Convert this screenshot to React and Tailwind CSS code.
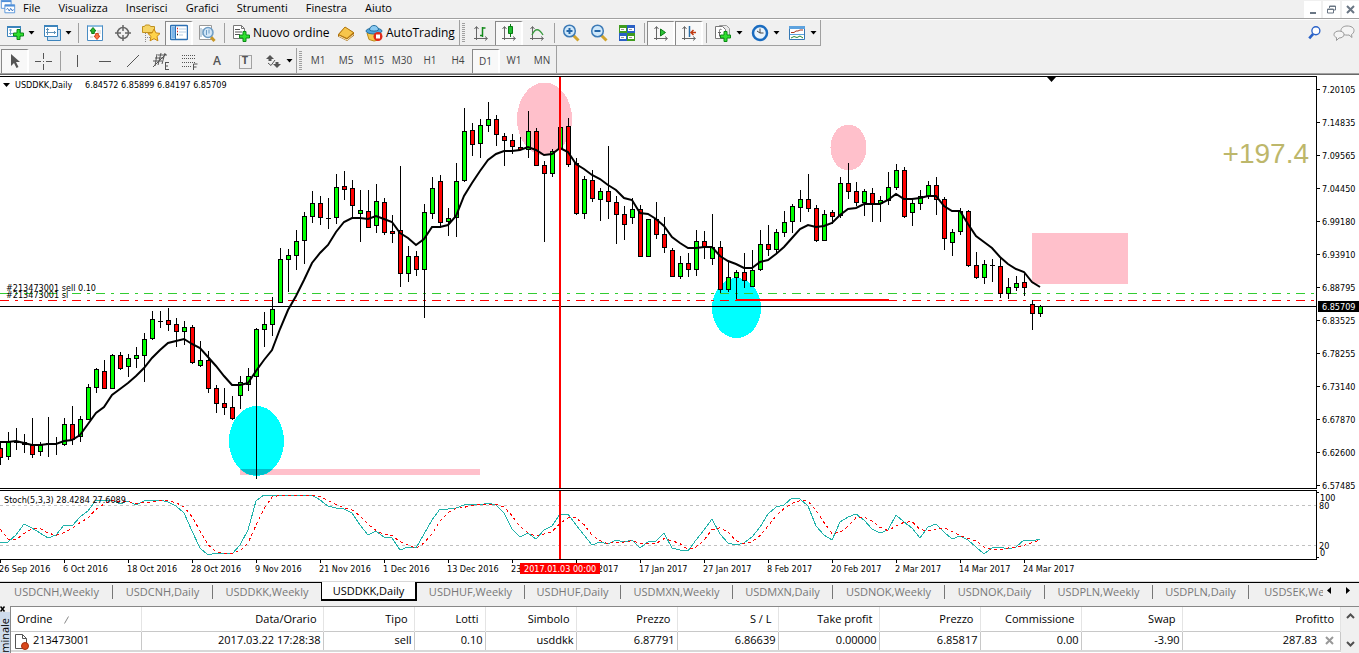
import { useState } from 'react';

// x is the bar index * 8, values are [color, high, open/close top, open/close bottom, low]
const candles = [
  ['r', 442, 448, 458, 465], ['g', 432, 442, 457, 460], ['d', 428, 442, 443, 450], ['r', 434, 442, 445, 453],
  ['r', 418, 445, 455, 458], ['g', 442, 445, 452, 456], ['d', 417, 443, 444, 457], ['d', 437, 443, 444, 455],
  ['g', 418, 424, 445, 446], ['r', 406, 424, 440, 445], ['g', 416, 419, 437, 442], ['g', 384, 387, 420, 420],
  ['g', 368, 369, 388, 393], ['r', 360, 371, 389, 389], ['g', 354, 355, 389, 389], ['r', 352, 355, 369, 370],
  ['g', 354, 358, 367, 377], ['g', 347, 355, 359, 368], ['g', 333, 339, 356, 382], ['g', 311, 319, 339, 340],
  ['d', 311, 321, 322, 328], ['r', 308, 320, 325, 331], ['r', 318, 324, 332, 347], ['g', 321, 327, 332, 345],
  ['r', 325, 327, 363, 364], ['g', 341, 360, 366, 367], ['r', 351, 360, 389, 393], ['r', 385, 388, 404, 413],
  ['r', 388, 403, 408, 415], ['r', 396, 407, 419, 420], ['g', 376, 382, 396, 409], ['g', 368, 376, 385, 391],
  ['g', 328, 329, 377, 479], ['g', 312, 324, 330, 347], ['g', 297, 309, 325, 336], ['g', 248, 259, 303, 303],
  ['g', 249, 255, 260, 292], ['g', 230, 241, 256, 270], ['g', 212, 216, 241, 264], ['g', 191, 203, 217, 223],
  ['r', 196, 203, 218, 225], ['d', 198, 218, 219, 229], ['g', 174, 187, 218, 224], ['r', 171, 186, 190, 200],
  ['r', 180, 188, 206, 218], ['g', 190, 210, 214, 242], ['r', 190, 211, 228, 228], ['g', 184, 201, 226, 233],
  ['r', 198, 202, 233, 235], ['r', 215, 231, 234, 243], ['r', 166, 230, 274, 287], ['g', 246, 256, 274, 282],
  ['r', 251, 256, 270, 276], ['g', 204, 212, 270, 318], ['g', 177, 188, 214, 219], ['r', 175, 181, 223, 228],
  ['g', 208, 218, 222, 236], ['g', 163, 181, 218, 237], ['g', 108, 131, 181, 182], ['r', 123, 130, 145, 156],
  ['g', 119, 125, 144, 158], ['g', 102, 119, 126, 132], ['r', 115, 119, 135, 146], ['r', 133, 136, 141, 166],
  ['r', 134, 140, 147, 154], ['r', 137, 147, 150, 150], ['g', 111, 131, 150, 158], ['r', 128, 131, 166, 166],
  ['r', 161, 165, 174, 242], ['g', 149, 151, 174, 177], ['g', 127, 127, 149, 149], ['r', 118, 126, 165, 167],
  ['r', 158, 163, 214, 215], ['g', 176, 179, 214, 219], ['r', 170, 180, 199, 202], ['g', 188, 191, 200, 221],
  ['r', 146, 191, 202, 219], ['r', 196, 202, 215, 244], ['r', 206, 214, 225, 240], ['g', 198, 209, 218, 224],
  ['r', 205, 209, 257, 257], ['g', 219, 219, 257, 257], ['r', 202, 219, 235, 239], ['r', 217, 234, 248, 253],
  ['r', 248, 250, 277, 277], ['g', 256, 263, 277, 279], ['r', 253, 263, 270, 277], ['g', 230, 241, 270, 276],
  ['r', 231, 241, 247, 259], ['g', 214, 247, 259, 265], ['r', 241, 247, 290, 293], ['g', 262, 277, 290, 292],
  ['g', 270, 272, 278, 299], ['r', 253, 272, 281, 288], ['g', 250, 270, 287, 287], ['g', 230, 244, 270, 271],
  ['r', 225, 244, 250, 256], ['g', 229, 232, 250, 253], ['g', 211, 222, 233, 237], ['g', 204, 206, 222, 233],
  ['g', 190, 199, 208, 222], ['r', 174, 199, 209, 212], ['r', 205, 208, 241, 242], ['g', 210, 214, 241, 241],
  ['r', 210, 212, 217, 224], ['g', 177, 183, 216, 218], ['r', 163, 183, 192, 199], ['r', 182, 191, 203, 206],
  ['g', 189, 191, 203, 216], ['r', 188, 193, 204, 222], ['g', 196, 200, 204, 222], ['g', 172, 187, 201, 205],
  ['g', 164, 170, 188, 190], ['r', 167, 170, 217, 218], ['g', 199, 203, 213, 226], ['g', 190, 196, 204, 210],
  ['g', 181, 185, 197, 199], ['r', 177, 185, 200, 215], ['r', 197, 199, 239, 250], ['g', 229, 232, 243, 256],
  ['g', 208, 211, 232, 235], ['r', 210, 211, 266, 267], ['r', 252, 265, 278, 279], ['g', 260, 264, 278, 284],
  ['d', 259, 265, 266, 282], ['r', 257, 266, 294, 298], ['g', 278, 287, 294, 299], ['g', 276, 283, 288, 291],
  ['r', 272, 282, 288, 296], ['r', 300, 304, 314, 330], ['g', 305, 306, 314, 317],
];

const average = [
  442, 442, 441, 443, 445, 445, 444, 444, 441, 440, 435, 424, 413, 407, 395, 389, 383, 376, 368, 358,
  350, 343, 341, 339, 344, 348, 357, 366, 376, 385, 385, 383, 371, 360, 350, 329, 310, 296, 280, 263,
  253, 245, 232, 222, 218, 218, 219, 216, 219, 222, 233, 238, 245, 239, 227, 227, 225, 216, 196, 183,
  171, 160, 154, 151, 151, 150, 147, 150, 155, 154, 148, 152, 164, 169, 175, 179, 185, 190, 198, 200,
  213, 214, 219, 226, 237, 243, 248, 248, 247, 247, 256, 261, 264, 268, 268, 262, 260, 254, 247, 238,
  229, 225, 227, 226, 223, 215, 209, 208, 204, 204, 204, 200, 194, 199, 199, 198, 196, 196, 206, 211,
  211, 224, 236, 242, 248, 257, 264, 269, 272, 282, 287,
];

const stochMain = [
  542, 542, 535, 524, 528, 533, 538, 535, 525, 526, 517, 511, 500, 501, 500, 504, 501, 505, 501, 500,
  500, 502, 506, 513, 531, 548, 555, 553, 553, 554, 545, 530, 501, 495, 495, 496, 495, 495, 495, 495,
  500, 506, 508, 509, 513, 525, 535, 531, 537, 538, 550, 547, 548, 534, 520, 509, 509, 508, 505, 504,
  505, 503, 505, 513, 529, 537, 533, 539, 530, 526, 514, 514, 525, 535, 545, 542, 544, 540, 542, 540,
  548, 542, 541, 533, 548, 550, 551, 540, 530, 519, 534, 543, 545, 543, 537, 527, 514, 507, 505, 498,
  499, 506, 526, 535, 540, 522, 517, 514, 520, 529, 533, 530, 515, 522, 528, 538, 527, 524, 532, 539,
  536, 540, 547, 554, 548, 547, 549, 547, 540, 541, 539,
];

// %D is the three bar average of %K
const stochSignal = stochMain.map((v, i) => {
  if (i === 0) return 529;
  if (i === 1) return 539;
  return (v + stochMain[i - 1] + stochMain[i - 2]) / 3;
});

const toPoints = (values) => values.map((y, i) => `${i * 8},${y}`).join(' ');

const priceLabels = [
  ['7.20105', 90], ['7.14835', 123], ['7.09565', 156], ['7.04450', 189], ['6.99180', 222],
  ['6.93910', 255], ['6.88795', 288], ['6.83525', 321], ['6.78255', 354], ['6.73140', 387],
  ['6.67870', 420], ['6.62600', 453], ['6.57485', 486],
];

const dates = [
  '26 Sep 2016', '6 Oct 2016', '18 Oct 2016', '28 Oct 2016', '9 Nov 2016', '21 Nov 2016',
  '1 Dec 2016', '13 Dec 2016', '23 Dec 2016', '5 Jan 2017', '17 Jan 2017', '27 Jan 2017',
  '8 Feb 2017', '20 Feb 2017', '2 Mar 2017', '14 Mar 2017', '24 Mar 2017',
];

const menu = ['File', 'Visualizza', 'Inserisci', 'Grafici', 'Strumenti', 'Finestra', 'Aiuto'];

const periods = ['M1', 'M5', 'M15', 'M30', 'H1', 'H4', 'D1', 'W1', 'MN'];

const tabs = [
  ['USDCNH,Weekly', 'w-28'], ['USDCNH,Daily', 'w-25'], ['USDDKK,Weekly', 'w-27'], ['USDDKK,Daily', 'w-24'],
  ['USDHUF,Weekly', 'w-27'], ['USDHUF,Daily', 'w-24'], ['USDMXN,Weekly', 'w-28'], ['USDMXN,Daily', 'w-25'],
  ['USDNOK,Weekly', 'w-28'], ['USDNOK,Daily', 'w-25'], ['USDPLN,Weekly', 'w-27'], ['USDPLN,Daily', 'w-24'],
  ['USDSEK,Weekly', 'w-28'],
];

const columns = [
  ['Ordine', '213473001', 'w-[130px]'],
  ['Data/Orario', '2017.03.22 17:28:38', 'w-[182px]'],
  ['Tipo', 'sell', 'w-[91px]'],
  ['Lotti', '0.10', 'w-[71px]'],
  ['Simbolo', 'usddkk', 'w-[91px]'],
  ['Prezzo', '6.87791', 'w-[101px]'],
  ['S / L', '6.86639', 'w-[101px]'],
  ['Take profit', '0.00000', 'w-[101px]'],
  ['Prezzo', '6.85817', 'w-[101px]'],
  ['Commissione', '0.00', 'w-[101px]'],
  ['Swap', '-3.90', 'w-[101px]'],
  ['Profitto', '287.83', ''],
];

const Icon = ({ children, size = 18 }) => (
  <svg width={size} height={size} viewBox="0 0 18 18" fill="none" className="shrink-0" aria-hidden="true">
    {children}
  </svg>
);

const Plus = ({ x, y }) => (
  <path
    transform={`translate(${x} ${y})`}
    d="M4 0.5h3v3.500h3.500v3H7v3.500H4V7H0.500V4H4z"
    fill="#2fe02f"
    stroke="#0b8a16"
  />
);

const Axes = () => (
  <path d="M4.500 16V3M2.500 5l2-2.500l2 2.500M2 14.500h13M13 12.500l2.500 2l-2.500 2" stroke="#666" />
);

const icons = {
  app: (
    <>
      <path d="M1.500 1.500h11v9h-11z" fill="#fff" stroke="#4f8fd8" />
      <path d="M1.500 2.500h11" stroke="#4f8fd8" strokeWidth="2" />
      <path d="M5.500 6.500h11v9h-11z" fill="#fff" stroke="#4f8fd8" />
      <path d="M5.500 7.500h11" stroke="#4f8fd8" strokeWidth="2" />
      <path d="M7 12l1.500-1.500l2 3l1.500-3l2 3l1-2" stroke="#2f6fc0" />
    </>
  ),
  newChart: (
    <>
      <path d="M1.500 2.500h13v10h-13z" fill="#fff" stroke="#3c84bc" />
      <path d="M1 3h14" stroke="#3c84bc" strokeWidth="2" />
      <path d="M4.500 5v6M3 9.500h9M3 6h3" stroke="#6fa3c8" />
      <Plus x={7} y={5} />
    </>
  ),
  profiles: (
    <>
      <path d="M4.500 5.500h13v11h-13z" fill="#cfe3f3" stroke="#3c84bc" />
      <path d="M1.500 1.500h13v11h-13z" fill="#fff" stroke="#3c84bc" />
      <path d="M1 2h14" stroke="#3c84bc" strokeWidth="2" />
      <path d="M4.500 4v7M3 8.500h10M3 5.500h3M11 7l1.500 1.500l-1.500 1.500" stroke="#5f93b8" />
    </>
  ),
  market: (
    <>
      <path d="M1.500 1.500h15v15h-15z" fill="#fff" stroke="#4a8dc4" />
      <path d="M2 2h14" stroke="#8dbce0" strokeWidth="2" />
      <path d="M11 7h4M11 9h4M4 13h3" stroke="#ccc" />
      <path d="M7 3.500L10 7H8.300v2.500H5.700V7H4z" fill="#27b92a" stroke="#0c7a18" />
      <path d="M11 15.500L8 12h1.700V9.500h2.600V12H14z" fill="#ff7a45" stroke="#d0421b" />
    </>
  ),
  target: (
    <>
      <circle cx="9" cy="9" r="5.500" stroke="#666" strokeWidth="1.500" />
      <path d="M9 1v6M9 11v6M1 9h6M11 9h6" stroke="#666" strokeWidth="1.500" />
    </>
  ),
  folder: (
    <>
      <path d="M0.500 8.500v-6h2l1-1.500h4l1 1.500h4v6z" fill="#f6d465" stroke="#bf9120" />
      <path d="M3.500 9v9M5 13.500h3" stroke="#888" strokeDasharray="1 1" />
      <path d="M12 5l1.900 3.900l4.300.5l-3.200 3l.9 4.400L12 14.700L8.100 16.800l.9-4.400l-3.200-3l4.300-.5z" fill="#ffd34a" stroke="#c8870e" />
    </>
  ),
  navigator: (
    <>
      <rect x="0.500" y="1.500" width="17" height="14" rx="1" fill="#fff" stroke="#2c70b4" strokeWidth="1.500" />
      <path d="M1.500 2.500h4v12h-4z" fill="#7db4e8" />
      <path d="M5.500 2v13" stroke="#2c70b4" />
      <path d="M9 5h7M9 8h7M9 11h4" stroke="#b6cde2" />
      <path d="M7 4.500h1M7 7.500h1" stroke="#e02020" strokeWidth="1.500" />
      <path d="M7 10.500h1" stroke="#222" strokeWidth="1.500" />
    </>
  ),
  tester: (
    <>
      <path d="M1.500 1.500h12v14h-12z" fill="#fff" stroke="#999" />
      <path d="M3 4v9M5 11V5M7 13V6" stroke="#88a8c0" />
      <path d="M13 13l3.500 4" stroke="#c89828" strokeWidth="3" />
      <circle cx="10" cy="8.500" r="5" fill="#cfe6f8" fillOpacity="0.900" stroke="#6d9cc4" strokeWidth="1.500" />
      <path d="M8.500 6v5M11 5.500v4" stroke="#6d9cc4" />
    </>
  ),
  order: (
    <>
      <path d="M1.500 1.500h8l3 3v10h-11z" fill="#fff" stroke="#777" />
      <path d="M9.500 1.500v3h3" stroke="#777" />
      <path d="M3 5.500h5M3 8h7M3 10.500h5" stroke="#555" />
      <Plus x={7} y={7} />
    </>
  ),
  book: (
    <>
      <path d="M1 10.500L8 3l9 5.500v3L10 17l-9-4.500z" fill="#a8690b" />
      <path d="M1.500 10.500L8 3l8.500 5.500L10 14.500z" fill="#f6c54b" stroke="#b57910" />
      <path d="M2 12l8 4l6.500-5.500" stroke="#fff0c0" />
    </>
  ),
  auto: (
    <>
      <path d="M2 9h14l-2.500 7l-4.500 1l-5-1.500z" fill="#f3c64c" stroke="#bd8a17" />
      <ellipse cx="9" cy="7" rx="8" ry="3" fill="#4ea4dd" stroke="#256f9f" />
      <path d="M4.500 6c0-6 9-6 9 0c-2 1.500-7 1.500-9 0z" fill="#8ccbf2" stroke="#256f9f" />
      <circle cx="13" cy="12.500" r="4.500" fill="#e02a1a" />
      <path d="M11 10.500h4v4h-4z" fill="#fff" />
    </>
  ),
  bars: (
    <>
      <Axes />
      <path d="M10.500 3v10M10.500 4h3M8 11.500h2" stroke="#148a1c" strokeWidth="1.500" />
    </>
  ),
  candle: (
    <>
      <Axes />
      <path d="M10.500 0v13" stroke="#0b7a14" />
      <path d="M8.500 2.500h4v7h-4z" fill="#20c030" stroke="#0b7a14" />
    </>
  ),
  line: (
    <>
      <Axes />
      <path d="M4 11c3-7 7-7 11 0" stroke="#3a9a3f" strokeWidth="1.300" />
    </>
  ),
  zoomIn: (
    <>
      <path d="M11 11l5.500 5.500" stroke="#d0a32e" strokeWidth="3" />
      <circle cx="7.500" cy="7" r="5.800" fill="#cfe8fa" stroke="#3c7ab6" strokeWidth="1.500" />
      <path d="M4.500 7h6M7.500 4v6" stroke="#2466a8" strokeWidth="2" />
    </>
  ),
  zoomOut: (
    <>
      <path d="M11 11l5.500 5.500" stroke="#d0a32e" strokeWidth="3" />
      <circle cx="7.500" cy="7" r="5.800" fill="#cfe8fa" stroke="#3c7ab6" strokeWidth="1.500" />
      <path d="M4.500 7h6" stroke="#2466a8" strokeWidth="2" />
    </>
  ),
  tile: (
    <>
      <path d="M1 1h8v8H1zM9 9h8v8H9z" fill="#3f9c1f" />
      <path d="M9 1h8v8H9zM1 9h8v8H1z" fill="#2a5fc4" />
      <path d="M2 4h6v3H2zM10 4h6v3h-6zM2 12h6v3H2zM10 12h6v3h-6z" fill="#fff" />
      <path d="M3 5.500h3M11 5.500h3M3 13.500h3M11 13.500h3" stroke="#999" />
    </>
  ),
  scroll: (
    <>
      <Axes />
      <path d="M8.500 5v7l5-3.500z" fill="#2bc236" stroke="#0b7a14" />
    </>
  ),
  shift: (
    <>
      <Axes />
      <path d="M9.500 2v11" stroke="#2a6fa8" strokeWidth="1.500" />
      <path d="M11 8.500h5M13.500 6l-2.500 2.500l2.500 2.500" stroke="#c03a10" strokeWidth="1.500" />
    </>
  ),
  indicators: (
    <>
      <path d="M5.500 1.500h7l3 3v9h-10z" fill="#e8e8e8" stroke="#999" />
      <path d="M1.500 2.500h7l3 3v9h-10z" fill="#fff" stroke="#777" />
      <path d="M7.500 5.500c-2-.5-2 0-2 2v5M4 8.500h3" stroke="#666" />
      <Plus x={6} y={7} />
    </>
  ),
  clock: (
    <>
      <circle cx="9" cy="9" r="7" fill="#eaf4fc" stroke="#1a6cc0" strokeWidth="2.500" />
      <path d="M9 4.500V9h3.500M9 9L6 7" stroke="#444" />
    </>
  ),
  template: (
    <>
      <path d="M1.500 2.500h15v13h-15z" fill="#fff" stroke="#3578b4" />
      <path d="M1 3.500h16" stroke="#5da2de" strokeWidth="3" />
      <path d="M2 10.500h14" stroke="#5da2de" />
      <path d="M3 8.500h3l2-1.500h2l2-1h3" stroke="#a8361c" />
      <path d="M3 14l3-1.500l3 1l3-1.500l3 2" stroke="#2b8a34" />
    </>
  ),
  cursor: <path d="M5 2v12l3-3l2.500 5l2-1l-2.500-5h4z" fill="#555" />,
  cross: <path d="M9.500 1v6M9.500 12v6M1 9.500h6M12 9.500h6M9 9.500h1" stroke="#555" />,
  vline: <path d="M9.500 3v12" stroke="#555" />,
  hline: <path d="M3 9.500h12" stroke="#555" />,
  trend: <path d="M3 15L15 3" stroke="#555" />,
  channel: (
    <>
      <path d="M1 15L14 2M1 9h9M3 6h9M6 3h9M5 2L3 14M9 1L6 13M13 1l-3 11" stroke="#555" />
      <path d="M13 10.500h4M13 14h3M13 17.500h4M13.500 10v8" stroke="#555" />
    </>
  ),
  fibo: (
    <>
      <path d="M2 3.500h14M2 6.500h14M2 10.500h14M2 14.500h9" stroke="#555" strokeDasharray="1 1" />
      <path d="M13.500 18v-6h4M13.500 15h3" stroke="#555" />
    </>
  ),
  arrows: (
    <>
      <path d="M6 3l4 4H7.500v2h-3V7H2z" fill="#555" />
      <path d="M13 16l-4-4h2.500v-2h3v2H17z" fill="#555" />
      <path d="M4 11l3 2.500l4-5.500" stroke="#555" />
    </>
  ),
  box: <path d="M3.500 3.500h12v13h-12z" stroke="#555" strokeDasharray="1 1" />,
  search: (
    <>
      <path d="M7 10l-4.500 5" stroke="#2a62c8" strokeWidth="3" />
      <circle cx="10" cy="6.500" r="4.500" fill="#fff" stroke="#2a62c8" strokeWidth="1.500" />
    </>
  ),
  orderDoc: (
    <>
      <path d="M3.500 2.500h7l4 4v10h-11z" fill="#fff" stroke="#555" />
      <path d="M10.500 2.500v4h4" stroke="#555" />
      <circle cx="13" cy="14" r="3.500" fill="#d9481c" stroke="#a82e0c" />
    </>
  ),
};

const ToolButton = ({ name, label, pressed = false, dropdown = false }) => (
  <button
    type="button"
    aria-label={label}
    aria-pressed={pressed}
    className={`flex h-6 items-center ${dropdown ? 'w-[37px] gap-1 pl-[5px]' : 'w-7 justify-center'} ${
      pressed ? 'border-t border-l border-r-2 border-t-[#888] border-l-[#888] border-r-white bg-[#f8f8f8]' : ''
    }`}
  >
    <Icon>{icons[name]}</Icon>
    {dropdown && <Caret />}
  </button>
);

const Caret = () => (
  <svg width="7" height="4" viewBox="0 0 7 4" className="shrink-0" aria-hidden="true">
    <path d="M0.500 0h6L3.500 3.500z" fill="#000" />
  </svg>
);

const Separator = () => (
  <div className="flex h-5 w-1.5 justify-center">
    <div className="w-px bg-[#a0a0a0]" />
  </div>
);

const Grip = () => (
  <div className="flex h-6 w-[7px] items-center justify-center">
    <div className="h-5 w-[3px] bg-[repeating-linear-gradient(180deg,#a0a0a0_0px,#a0a0a0_1px,#f0f0f0_1px,#f0f0f0_2px)]" />
  </div>
);

const MenuBar = () => (
  <nav className="flex h-[18px] items-center text-[11px]">
    <div className="w-[18px] pb-1">
      <Icon size={16}>{icons.app}</Icon>
    </div>
    <div className="flex flex-1 gap-[18px] pb-0.5 pl-[5px] leading-4">
      {menu.map((item) => (
        <button key={item} type="button">
          {item}
        </button>
      ))}
    </div>
    <div className="flex gap-0.5 text-[#6a7684]">
      <button type="button" aria-label="Minimize" className="flex h-[17px] w-[17px] items-center justify-center bg-white">
        <svg width="9" height="9" viewBox="0 0 9 9"><path d="M2 8h6" stroke="currentColor" strokeWidth="2" /></svg>
      </button>
      <button type="button" aria-label="Restore" className="flex h-[17px] w-[17px] items-center justify-center bg-white">
        <svg width="9" height="9" viewBox="0 0 9 9" fill="none" stroke="currentColor">
          <path d="M2.500 3V1h6v4h-2M0.500 4h6v4h-6zM0.500 4.500h6M2.500 1.500h6" />
        </svg>
      </button>
      <button type="button" aria-label="Close" className="flex h-[17px] w-[17px] items-center justify-center bg-white">
        <svg width="9" height="9" viewBox="0 0 9 9"><path d="M1 1l7 7M8 1l-7 7" stroke="currentColor" strokeWidth="2" /></svg>
      </button>
    </div>
  </nav>
);

const MainToolbar = () => (
  <div className="border-t border-[#a0a0a0]">
    <div className="flex h-[27px] items-center justify-between border-t border-white">
      <div className="flex h-[26px] items-center border-r border-b border-[#a0a0a0] pl-px">
        <ToolButton name="newChart" label="New chart" dropdown />
        <ToolButton name="profiles" label="Profiles" dropdown />
        <Separator />
        <ToolButton name="market" label="Market watch" />
        <ToolButton name="target" label="Data window" />
        <ToolButton name="folder" label="Navigator" />
        <ToolButton name="navigator" label="Terminal" pressed />
        <ToolButton name="tester" label="Strategy tester" />
        <Separator />
        <button type="button" className="flex h-6 w-[105px] items-center gap-[3px] pl-[5px] text-xs whitespace-nowrap">
          <Icon>{icons.order}</Icon>
          Nuovo ordine
        </button>
        <ToolButton name="book" label="MetaEditor" />
        <button type="button" className="flex h-6 w-[99px] items-center gap-[3px] pl-[5px] text-xs whitespace-nowrap">
          <Icon>{icons.auto}</Icon>
          AutoTrading
        </button>
        <div className="h-full w-px bg-[#a0a0a0]" />
        <Grip />
        <ToolButton name="bars" label="Bar chart" />
        <ToolButton name="candle" label="Candlesticks" pressed />
        <ToolButton name="line" label="Line chart" />
        <Separator />
        <ToolButton name="zoomIn" label="Zoom in" />
        <ToolButton name="zoomOut" label="Zoom out" />
        <ToolButton name="tile" label="Tile windows" />
        <Separator />
        <ToolButton name="scroll" label="Auto scroll" pressed />
        <ToolButton name="shift" label="Chart shift" pressed />
        <Separator />
        <ToolButton name="indicators" label="Indicators" dropdown />
        <ToolButton name="clock" label="Periods" dropdown />
        <ToolButton name="template" label="Templates" dropdown />
      </div>
      <div className="flex items-center gap-2.5 pr-1">
        <button type="button" aria-label="Search">
          <Icon size={16}>{icons.search}</Icon>
        </button>
        <button type="button" aria-label="Chat">
          <svg width="22" height="18" viewBox="0 0 22 18" fill="#f4f4f4" stroke="#999">
            <path d="M14 2c4 0 7 1.500 7 4.500c0 2-1 3-2.500 4l.5 3l-3-2.500c-5 .5-8-1-8-4.500C8 3.500 11 2 14 2z" />
            <path d="M6 7c3 0 5 1.500 5 3.500S9 14 6 14l-2.500 2.500v-3C2 13 1 12 1 10.500C1 8.500 3 7 6 7z" />
          </svg>
        </button>
      </div>
    </div>
  </div>
);

const DrawingToolbar = ({ period, setPeriod }) => (
  <div className="flex h-[27px] items-center">
    <div className="flex h-full items-center border-r border-[#a0a0a0] pt-0.5 pl-px">
      <ToolButton name="cursor" label="Cursor" pressed />
      <ToolButton name="cross" label="Crosshair" />
      <Separator />
      <ToolButton name="vline" label="Vertical line" />
      <ToolButton name="hline" label="Horizontal line" />
      <ToolButton name="trend" label="Trendline" />
      <ToolButton name="channel" label="Equidistant channel" />
      <ToolButton name="fibo" label="Fibonacci retracement" />
      <button type="button" className="h-6 w-7 text-xs font-semibold text-[#555]">A</button>
      <button type="button" className="relative flex h-6 w-7 items-center justify-center text-[11px] font-bold text-[#555]">
        <span className="absolute inset-0 flex items-center justify-center">
          <Icon>{icons.box}</Icon>
        </span>
        T
      </button>
      <ToolButton name="arrows" label="Arrows" dropdown />
      <div className="h-full w-px bg-[#a0a0a0]" />
      <Grip />
      {periods.map((p) => (
        <button
          key={p}
          type="button"
          onClick={() => setPeriod(p)}
          className={`h-6 w-7 text-[10px] text-[#444] ${
            p === period ? 'border-t border-l border-r-2 border-t-[#888] border-l-[#888] border-r-white bg-[#f8f8f8]' : ''
          }`}
        >
          {p}
        </button>
      ))}
    </div>
  </div>
);

const Candle = ({ x, data }) => {
  const [color, high, top, bottom, low] = data;
  return (
    <g>
      <rect x={x} y={high} width="1" height={low - high} fill="#000" />
      <rect x={x - 2} y={top} width="5" height={bottom - top} fill="#000" />
      {color !== 'd' && (
        <rect
          x={x - 1}
          y={top + 1}
          width="3"
          height={Math.max(bottom - top - 2, 1)}
          fill={color === 'g' ? '#00ff00' : '#ff0000'}
        />
      )}
    </g>
  );
};

// the first row of the drawing is row 75 of the price scale
const Chart = () => (
  <svg className="block h-[506px] w-full bg-white font-['DejaVu_Sans_Condensed','DejaVu_Sans',sans-serif] text-[9px]">
    <defs>
      <clipPath id="low-zone">
        <ellipse cx="256.500" cy="441" rx="27.500" ry="35" />
      </clipPath>
    </defs>
    <g transform="translate(0 -75)">
      <g shapeRendering="crispEdges">
        <rect x="240" y="469" width="240" height="6" fill="#ffc0cb" />
        <rect x="1032" y="233" width="96" height="51" fill="#ffc0cb" />
        <ellipse cx="544.500" cy="119" rx="27.500" ry="36.500" fill="#ffc0cb" />
        <ellipse cx="848.500" cy="147.500" rx="18" ry="23" fill="#ffc0cb" />
        <ellipse cx="256.500" cy="441" rx="27.500" ry="35" fill="#00ffff" />
        <rect x="240" y="469" width="240" height="6" fill="#00c0cb" clipPath="url(#low-zone)" />
        <ellipse cx="736.500" cy="308" rx="24.500" ry="30" fill="#00ffff" />
      </g>

      <g shapeRendering="crispEdges">
        <line x1="0" x2="100%" y1="293.500" y2="293.500" stroke="#32cd32" strokeDasharray="9 6 3 6" />
        <line x1="0" x2="100%" y1="300.500" y2="300.500" stroke="#ff0000" strokeDasharray="9 6 3 6" />
        <line x1="0" x2="100%" y1="306.500" y2="306.500" stroke="#000" />
        <line x1="0" x2="100%" y1="505.500" y2="505.500" stroke="#c0c0c0" strokeDasharray="3 3" />
        <line x1="0" x2="100%" y1="545.500" y2="545.500" stroke="#c0c0c0" strokeDasharray="3 3" />
        <line x1="0" x2="100%" y1="76.500" y2="76.500" stroke="#000" />
      </g>

      <g shapeRendering="crispEdges">
        {candles.map((c, i) => (
          <Candle key={i} x={i * 8} data={c} />
        ))}
        <rect x="736" y="299" width="153" height="2" fill="#ff0000" />
      </g>
      <polyline points={toPoints(average)} fill="none" stroke="#000" strokeWidth="2" />
      <rect x="559" y="77" width="2" height="411" fill="#ff0000" />

      <g shapeRendering="crispEdges" fill="none">
        <polyline points={toPoints(stochMain)} stroke="#20b2aa" />
        <polyline points={toPoints(stochSignal)} stroke="#ff0000" strokeDasharray="3 3" />
      </g>
      <rect x="559" y="491" width="2" height="68" fill="#ff0000" />
      <path d="M1047 77h9l-4.500 5z" fill="#000" />

      <path d="M3 83h7l-3.500 4z" fill="#000" />
      <text x="15" y="88">USDDKK,Daily</text>
      <text x="85" y="88">6.84572 6.85899 6.84197 6.85709</text>
      <text x="6" y="291">#213473001 sell 0.10</text>
      <text x="6" y="298">#213473001 sl</text>
      <text x="4" y="503">Stoch(5,3,3) 28.4284 27.6089</text>

      {/* price scale, pinned to the right edge */}
      <svg x="100%" y="0" width="1" height="600" className="overflow-visible">
        <rect x="-43" y="76" width="43" height="506" fill="#fff" />
        <path d="M-42.500 76v413M-42.500 490v70" stroke="#000" />
        {priceLabels.map(([label, y]) => (
          <g key={label}>
            <path d={`M-42 ${y - 0.5}h3`} stroke="#000" />
            <text x="-37" y={y + 3}>{label}</text>
          </g>
        ))}
        <path d="M-42 492.500h2M-42 557.500h2" stroke="#000" />
        <text x="-39" y="501">100</text>
        <text x="-40" y="509">80</text>
        <text x="-40" y="549">20</text>
        <text x="-39" y="556">0</text>
        <rect x="-41" y="301" width="41" height="11" fill="#000" />
        <text x="-37" y="310" fill="#fff">6.85709</text>
        <text
          x="-50"
          y="163"
          textAnchor="end"
          fill="#bdb76b"
          className="font-['Liberation_Sans',sans-serif] text-[28px]"
        >
          +197.4
        </text>
      </svg>

      {/* frames of the two panes */}
      <svg x="-43" y="0" width="100%" height="600" shapeRendering="crispEdges">
        <line x1="0" x2="100%" y1="488.500" y2="488.500" stroke="#000" />
        <line x1="0" x2="100%" y1="490.500" y2="490.500" stroke="#000" />
        <line x1="0" x2="100%" y1="559.500" y2="559.500" stroke="#000" />
      </svg>

      {dates.map((date, i) => (
        <g key={date}>
          <rect x={i * 64} y="560" width="1" height="3" fill="#000" />
          <text x={i * 64 - 1} y="572">{date}</text>
        </g>
      ))}
      <rect x="520" y="563" width="80" height="11" fill="#ff0000" />
      <text x="524" y="572" fill="#fff">2017.01.03 00:00</text>
    </g>
  </svg>
);

const ChartTabs = () => (
  <div className="flex h-[21px] shrink-0 border-t border-black bg-[#f0f0f0] text-[11px] text-[#777]">
    <div className="flex min-w-0 flex-1 overflow-x-clip pl-px">
      {tabs.map(([name, width], i) => (
        <button
          key={name}
          type="button"
          className={`flex shrink-0 items-center justify-center whitespace-nowrap ${width} ${
            i === 3 ? '-mt-px h-[19px] border border-t-0 border-r-2 border-b-2 border-black bg-white pt-0.5 text-black' : 'h-[18px]'
          }`}
        >
          <span className="flex-1">{name}</span>
          {i !== 2 && i !== 3 && <span className="h-3.5 w-px bg-[#777]" />}
        </button>
      ))}
    </div>
    <div className="flex w-9 items-center justify-between pr-2 pb-1 pl-1">
      <button type="button" aria-label="Scroll left">
        <svg width="5" height="8" viewBox="0 0 5 8"><path d="M4 0v7L0 3.500z" /></svg>
      </button>
      <button type="button" aria-label="Scroll right">
        <svg width="5" height="8" viewBox="0 0 5 8"><path d="M0 0v7l4-3.500z" /></svg>
      </button>
    </div>
  </div>
);

const Terminal = () => (
  <section className="flex min-h-0 flex-1 overflow-hidden bg-[#f0f0f0] pt-[3px] text-[11px]">
    <div className="flex w-2.5 shrink-0 flex-col">
      <button type="button" aria-label="Close terminal" className="flex h-3.5 items-center">
        <svg width="6" height="6" viewBox="0 0 6 6"><path d="M0.500 0.500l4 5M4.500 0.500l-4 5" stroke="#000" strokeWidth="1.500" /></svg>
      </button>
      <div className="flex shrink-0 justify-center bg-[#cfdcec] py-1.5">
        <span className="rotate-180 text-[11px] leading-[10px] [writing-mode:vertical-rl]">Terminale</span>
      </div>
    </div>
    <div className="flex-1 border-t border-l border-[#888] bg-white">
      <table className="w-full table-fixed border-collapse">
        <thead>
          <tr className="h-6 border-b border-[#c8c8c8]">
            {columns.map(([title, , width], i) => (
              <th
                key={i}
                className={`border-r border-[#e4e4e4] p-0 pr-1.5 font-normal ${width} ${i === 0 ? 'pl-1.5 text-left' : 'text-right'}`}
              >
                {title}
                {i === 0 && (
                  <svg width="5" height="8" viewBox="0 0 5 8" className="ml-3 inline"><path d="M0.500 7.500l4-7" stroke="#888" /></svg>
                )}
              </th>
            ))}
          </tr>
        </thead>
        <tbody>
          <tr className="h-[19px] border-b-2 border-[#d8d8d8]">
            {columns.map(([, value], i) => (
              <td key={i} className={`border-r border-[#c8c8c8] p-0 pr-0.5 ${i === 0 ? 'text-left' : 'text-right'}`}>
                {i === 0 ? (
                  <span className="flex items-center gap-[3px] pl-px">
                    <Icon>{icons.orderDoc}</Icon>
                    {value}
                  </span>
                ) : i === columns.length - 1 ? (
                  <span className="flex items-center justify-end gap-2 pr-1">
                    {value}
                    <button type="button" aria-label="Close order">
                      <svg width="9" height="9" viewBox="0 0 9 9"><path d="M1 1l7 7M8 1l-7 7" stroke="#999" strokeWidth="2" /></svg>
                    </button>
                  </span>
                ) : (
                  value
                )}
              </td>
            ))}
          </tr>
        </tbody>
      </table>
    </div>
    <div className="flex w-[18px] shrink-0 flex-col items-center justify-between border-t border-[#888] py-1.5">
      <svg width="9" height="6" viewBox="0 0 9 6" fill="none"><path d="M1 5l3.500-3.500L8 5" stroke="#505050" strokeWidth="2" /></svg>
      <svg width="9" height="6" viewBox="0 0 9 6" fill="none"><path d="M1 1l3.500 3.500L8 1" stroke="#505050" strokeWidth="2" /></svg>
    </div>
  </section>
);

export default function App() {
  const [period, setPeriod] = useState('D1');

  return (
    <div className="flex h-screen flex-col overflow-hidden bg-[#f0f0f0] font-['Open_Sans','Noto_Sans',sans-serif] text-black">
      <header className="shrink-0">
        <MenuBar />
        <MainToolbar />
        <DrawingToolbar period={period} setPeriod={setPeriod} />
        <div className="h-0.5 border-b border-[#696969] bg-[#a0a0a0]" />
      </header>
      <main className="shrink-0 border-b border-[#d8d8d8] bg-white">
        <Chart />
      </main>
      <ChartTabs />
      <Terminal />
    </div>
  );
}
